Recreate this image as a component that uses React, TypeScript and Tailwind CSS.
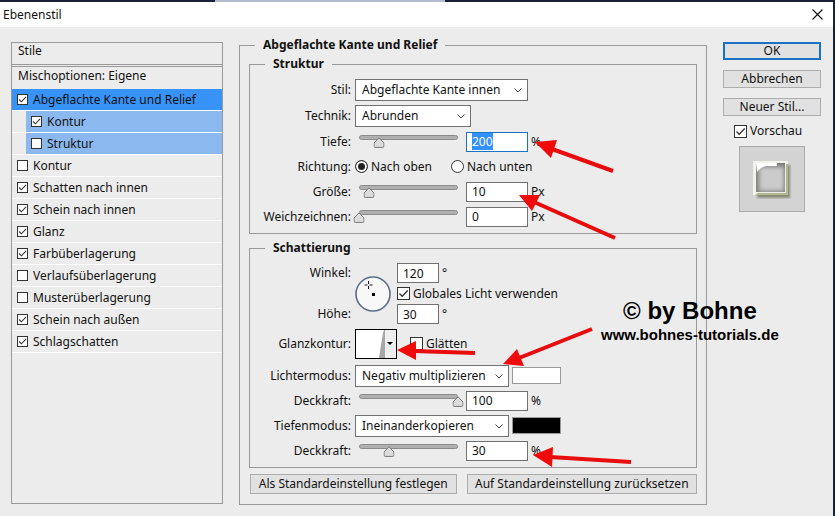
import React, { useEffect, useRef } from "react";

const styles = [
    { name: "Abgeflachte Kante und Relief", checked: true, active: true },
    { name: "Kontur", checked: true, sub: true },
    { name: "Struktur", checked: false, sub: true },
    { name: "Kontur", checked: false },
    { name: "Schatten nach innen", checked: true },
    { name: "Schein nach innen", checked: true },
    { name: "Glanz", checked: true },
    { name: "Farbüberlagerung", checked: true },
    { name: "Verlaufsüberlagerung", checked: false },
    { name: "Musterüberlagerung", checked: false },
    { name: "Schein nach außen", checked: true },
    { name: "Schlagschatten", checked: true },
];

const CheckBox = ({ label, checked = false, small = false, className = "" }: { label: string; checked?: boolean; small?: boolean; className?: string }) => {
    return (
        <label className={`flex items-center whitespace-nowrap ${small ? "gap-[5px]" : "gap-[3px]"} ${className}`}>
            <span className={`relative shrink-0 ${small ? "size-[11px]" : "size-[13px]"}`}>
                <input type="checkbox" defaultChecked={checked} className="peer block size-full appearance-none border border-[#333] bg-white" />
                <svg viewBox="0 0 13 13" className="pointer-events-none absolute inset-0 hidden size-full peer-checked:block">
                    <path d="M2.5 6.5L5.2 9.2L10.7 3.5" fill="none" stroke="#333" strokeWidth="1.3" />
                </svg>
            </span>
            {label}
        </label>
    )
}

const Row = ({ label, id, tall = false, children }: { label: string; id?: string; tall?: boolean; children: React.ReactNode }) => {
    return (
        <div className={`flex items-center ${tall ? "h-[26px]" : "h-[25px]"}`}>
            <Label id={id}>{label}</Label>
            {children}
        </div>
    )
}

const Label = ({ id, children }: { id?: string; children: React.ReactNode }) => {
    const cls = "mr-1 w-[101px] shrink-0 text-right whitespace-nowrap";
    return id ? <label htmlFor={id} className={cls}>{children}</label> : <span className={cls}>{children}</span>
}

const Select = ({ id, value, className }: { id: string; value: string; className: string }) => {
    return (
        <div className={`relative shrink-0 ${className}`}>
            <select id={id} className="block h-[22px] w-full appearance-none border border-[#707070] bg-white pl-1.5 leading-5">
                <option>{value}</option>
            </select>
            <svg viewBox="0 0 8 5" className="pointer-events-none absolute top-[9px] right-1.5 h-[5px] w-2">
                <path d="M0.5 0.5L4 4L7.5 0.5" fill="none" stroke="#444" />
            </svg>
        </div>
    )
}

// track with the house shaped thumb, followed by the number field
const SliderField = ({ id, label, value, percent, unit, selected = false }: { id: string; label: string; value: string; percent: number; unit: string; selected?: boolean }) => {
    const field = useRef<HTMLInputElement>(null);
    useEffect(() => {
        if (selected) {
            field.current?.focus();
            field.current?.select();
        }
    }, [selected]);

    return (
        <>
            <div className="relative ml-1 h-[13px] w-[99px] shrink-0">
                <div className="h-[5px] rounded-full border border-[#8c8c8c] bg-[#b0b0b0]"></div>
                <svg viewBox="0 0 11 11" className="absolute top-0.5 size-[11px] -translate-x-1/2" style={{ left: `${percent}%` }}>
                    <path d="M5.5 0.8L10.5 6V9.2Q10.5 10.4 9.3 10.4H1.7Q0.5 10.4 0.5 9.2V6Z" fill="#dcdcdc" stroke="#777" />
                </svg>
                <input type="range" aria-label={label} defaultValue={percent} className="absolute inset-0 w-full opacity-0" />
            </div>
            <input
                ref={field}
                id={id}
                defaultValue={value}
                className="ml-2 h-5 w-[62px] shrink-0 border border-[#707070] bg-white pl-[5px] outline-none selection:bg-[#3390ff] selection:text-white focus:border-[#1a72c4]"
            />
            <label htmlFor={id} className="ml-[3px]">{unit}</label>
        </>
    )
}

const Group = ({ title, className = "", legendClass = "ml-[15px]", children }: { title: string; className?: string; legendClass?: string; children: React.ReactNode }) => {
    return (
        <fieldset className={`border border-[#999] ${className}`}>
            <legend className={`px-2 text-[12px] leading-[18px] font-bold ${legendClass}`}>{title}</legend>
            {children}
        </fieldset>
    )
}

const StyleList = () => {
    return (
        <aside className="mt-[15px] mb-3 w-[212px] shrink-0 border border-[#999]">
            <h2 className="h-[22px] border-b border-[#999] pl-1.5 leading-4">Stile</h2>
            <h2 className="mt-px h-[23px] border-t border-[#999] pl-1.5 leading-[17px]">Mischoptionen: Eigene</h2>
            <ul>
                {styles.map((item, index) =>
                    <li key={index} className={`h-[22px] border-b border-white ${item.sub ? "pl-[14px]" : ""}`}>
                        <CheckBox
                            small
                            label={item.name}
                            checked={item.checked}
                            className={`h-full pl-[5px] ${item.active ? "bg-[#3893f8]" : ""} ${item.sub ? "bg-[#8bb9ef]" : ""}`}
                        />
                    </li>
                )}
            </ul>
        </aside>
    )
}

const Structure = () => {
    return (
        <Group title="Struktur">
            <div className="py-1">
                <Row tall label="Stil:" id="stil"><Select id="stil" value="Abgeflachte Kante innen" className="w-[173px]" /></Row>
                <Row tall label="Technik:" id="technik"><Select id="technik" value="Abrunden" className="w-[116px]" /></Row>
                <Row label="Tiefe:" id="tiefe"><SliderField id="tiefe" label="Tiefe" value="200" percent={20} unit="%" selected /></Row>
                <Row label="Richtung:">
                    {["Nach oben", "Nach unten"].map((item, index) =>
                        <label key={index} className="flex w-24 items-center gap-[3px] whitespace-nowrap">
                            <input
                                type="radio"
                                name="richtung"
                                defaultChecked={index === 0}
                                className="size-[13px] shrink-0 appearance-none rounded-full border border-[#333] bg-white checked:bg-[#222] checked:shadow-[inset_0_0_0_2px_white]"
                            />
                            {item}
                        </label>
                    )}
                </Row>
                <Row label="Größe:" id="groesse"><SliderField id="groesse" label="Größe" value="10" percent={10} unit="Px" /></Row>
                <Row label="Weichzeichnen:" id="weich"><SliderField id="weich" label="Weichzeichnen" value="0" percent={0} unit="Px" /></Row>
            </div>
        </Group>
    )
}

const Shading = () => {
    return (
        <Group title="Schattierung" className="mt-[5px]">
            <div className="pt-1.5 pb-1">
                <div className="flex h-[61px]">
                    <div className="flex flex-col justify-between leading-5">
                        <Label id="winkel">Winkel:</Label>
                        <Label id="hoehe">Höhe:</Label>
                    </div>
                    <svg viewBox="0 0 36 36" className="size-9 shrink-0 self-center">
                        <circle cx="18" cy="18" r="17" fill="#f8f8f8" stroke="#5c6d8c" strokeWidth="1.6" />
                        <path d="M13.5 5V8M13.5 10V13M9.500 9H12.500M14.500 9H17.500" stroke="#111" />
                        <rect x="17" y="17" width="3" height="3" fill="#000" />
                    </svg>
                    <div className="ml-1.5 flex flex-col justify-between">
                        <div className="flex items-center gap-[3px]">
                            <input id="winkel" defaultValue="120" className="h-5 w-[42px] border border-[#707070] bg-white pl-[5px]" />
                            <span className="leading-5">°</span>
                        </div>
                        <CheckBox label="Globales Licht verwenden" checked className="leading-5" />
                        <div className="flex items-center gap-[3px]">
                            <input id="hoehe" defaultValue="30" className="h-5 w-[42px] border border-[#707070] bg-white pl-[5px]" />
                            <span className="leading-5">°</span>
                        </div>
                    </div>
                </div>
                <div className="flex h-[39px] items-center">
                    <Label>Glanzkontur:</Label>
                    <button aria-label="Glanzkontur" className="shrink-0">
                        <svg viewBox="0 0 42 30" className="block h-[30px] w-[42px]">
                            <rect x="0.500" y="0.500" width="41" height="29" fill="#fff" stroke="#000" />
                            <rect x="30" y="1" width="11" height="28" fill="#efefef" />
                            <path d="M24 29L26 16L28 4L29 1H30V29Z" fill="#a6a6a6" />
                            <path d="M32 13H38L35 16Z" fill="#000" />
                        </svg>
                    </button>
                    <CheckBox label="Glätten" className="ml-[13px]" />
                </div>
                <Row label="Lichtermodus:" id="licht">
                    <Select id="licht" value="Negativ multiplizieren" className="w-[154px]" />
                    <button aria-label="Lichterfarbe" className="ml-[3px] h-[17px] w-[49px] border border-[#999] bg-white"></button>
                </Row>
                <Row label="Deckkraft:" id="deck1"><SliderField id="deck1" label="Deckkraft Lichter" value="100" percent={100} unit="%" /></Row>
                <Row label="Tiefenmodus:" id="tiefen">
                    <Select id="tiefen" value="Ineinanderkopieren" className="w-[154px]" />
                    <button aria-label="Tiefenfarbe" className="ml-[3px] h-[17px] w-[49px] border border-[#999] bg-black"></button>
                </Row>
                <Row label="Deckkraft:" id="deck2"><SliderField id="deck2" label="Deckkraft Tiefen" value="30" percent={30} unit="%" /></Row>
            </div>
        </Group>
    )
}

const Actions = () => {
    return (
        <aside className="mt-[15px] w-[98px] shrink-0">
            <div className="flex flex-col gap-[10px] leading-4">
                <button className="h-[18px] border-2 border-[#1a72c4] bg-[#e1e1e1] leading-none">OK</button>
                <button className="h-[18px] border border-[#adadad] bg-[#e1e1e1]">Abbrechen</button>
                <button className="h-[18px] border border-[#adadad] bg-[#e1e1e1]">Neuer Stil...</button>
            </div>
            <CheckBox label="Vorschau" checked className="mt-[7px] ml-[11px] h-4" />
            <div className="mt-[7px] ml-4 flex size-[66px] items-center justify-center border border-[#aaa] bg-[#d3d3d3]">
                <svg viewBox="0 0 40 40" className="size-10">
                    <defs>
                        <filter id="soft"><feGaussianBlur stdDeviation="1" /></filter>
                        <filter id="inner"><feGaussianBlur stdDeviation="2" /></filter>
                        <clipPath id="hole"><rect x="4" y="4" width="29" height="29" /></clipPath>
                    </defs>
                    <rect x="5" y="6" width="33" height="33" fill="#8a8d76" filter="url(#soft)" />
                    <path d="M1 2H36V36H1Z" fill="#f1f2ea" />
                    <path d="M36 5V36H3L6 34H33V5Z" fill="#b3b795" />
                    <path d="M33 4V33H4" fill="none" stroke="#eceee2" strokeWidth="2" />
                    <rect x="4" y="4" width="29" height="29" fill="#7e7e7e" />
                    <g clipPath="url(#hole)">
                        <rect x="7" y="8" width="25" height="24" fill="#cbcbcb" filter="url(#inner)" />
                        <path d="M4 4H25V7H14L9 9L5 13Z" fill="#fff" />
                    </g>
                </svg>
            </div>
        </aside>
    )
}

const arrows = [
    { head: "535,142 557,140 551,158", line: "M552 149L613 171" },
    { head: "519,195 540,195 532,211", line: "M534 202L615 238" },
    { head: "397,350 416,341 416,360", line: "M414 351L475 353" },
    { head: "503,364 517,349 524,366", line: "M519 358L592 329" },
    { head: "533,455 553,447 552,467", line: "M550 457L631 462" },
];

const Notes = () => {
    return (
        <div className="pointer-events-none absolute top-0 left-0">
            <svg width="835" height="514" viewBox="0 2 835 514">
                {arrows.map((item, index) =>
                    <g key={index} fill="#f00a0a" stroke="#e80c0c">
                        <path d={item.line} strokeWidth="4" />
                        <polygon points={item.head} stroke="none" />
                    </g>
                )}
            </svg>
            <div className="absolute top-[295px] left-[601px] font-['Liberation_Sans',Arial,sans-serif] font-bold whitespace-nowrap text-black">
                <p className="text-center text-2xl leading-7">© by Bohne</p>
                <p className="text-[15px] leading-5">www.bohnes-tutorials.de</p>
            </div>
        </div>
    )
}

const App = () => {
    return (
        <div className="flex min-h-screen flex-col border-r-2 border-[#1b2238] bg-[#ececec] font-['Noto_Sans',Tahoma,sans-serif] text-[12px] text-[#111]">
            <div className="flex h-0.5 bg-[#1b2238]">
                <div className="ml-[215px] w-[230px] bg-[#b4bccb]"></div>
            </div>
            <div className="relative flex flex-1 flex-col">
                <header className="flex h-[25px] items-center justify-between bg-white pr-[10px] pl-[3px]">
                    <h1>Ebenenstil</h1>
                    <button aria-label="Schließen">
                        <svg viewBox="0 0 11 11" className="block size-[11px]">
                            <path d="M0.500 0.500L10.500 10.500M10.500 0.500L0.500 10.500" stroke="#111" strokeWidth="1.1" />
                        </svg>
                    </button>
                </header>
                <main className="flex flex-1 gap-4 pr-3 pl-[11px]">
                    <StyleList />
                    <Group title="Abgeflachte Kante und Relief" className="mt-[9px] mb-[11px] flex-1 px-[9px]" legendClass="ml-1.5">
                        <div className="mt-px">
                            <Structure />
                            <Shading />
                            <div className="mt-1.5 mb-2 flex gap-[10px] pl-px leading-[18px]">
                                <button className="h-5 flex-[206] border border-[#adadad] bg-[#e1e1e1] whitespace-nowrap">Als Standardeinstellung festlegen</button>
                                <button className="h-5 flex-[230] border border-[#adadad] bg-[#e1e1e1] whitespace-nowrap">Auf Standardeinstellung zurücksetzen</button>
                            </div>
                        </div>
                    </Group>
                    <Actions />
                </main>
                <Notes />
            </div>
        </div>
    )
}

export default App
